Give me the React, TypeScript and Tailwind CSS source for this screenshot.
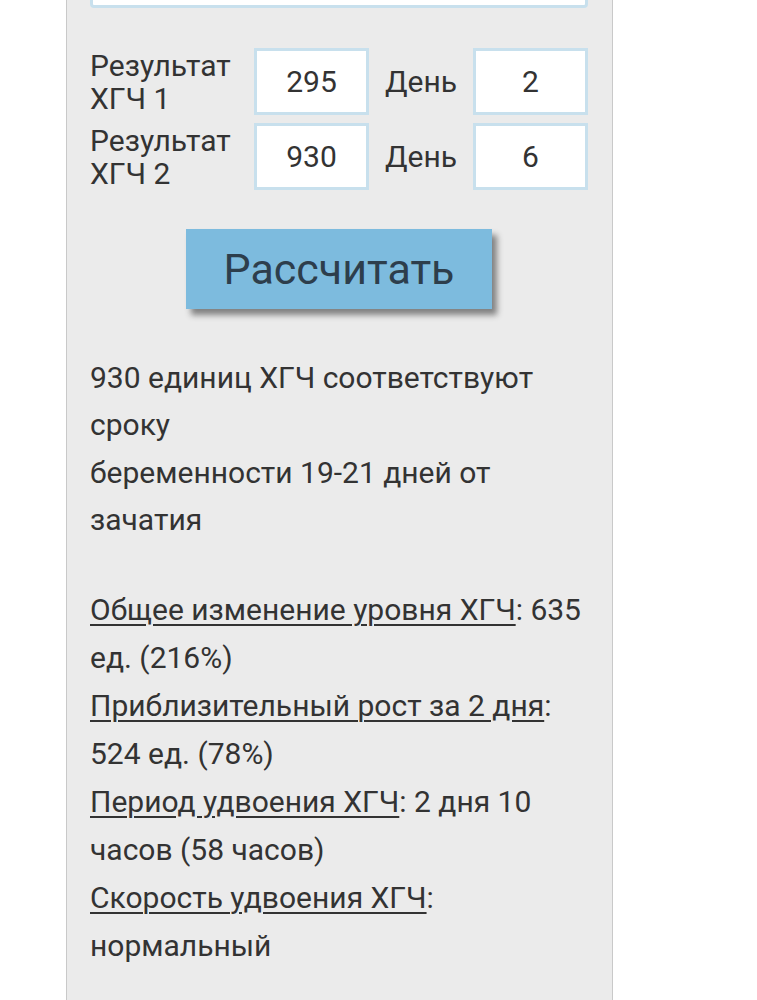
export default function App() {
  const rows = [
    { n: 1, value: '295', day: '2' },
    { n: 2, value: '930', day: '6' },
  ];

  return (
    <div className="min-h-screen bg-white overflow-hidden" style={{ fontFamily: 'Roboto, "Noto Sans", sans-serif' }}>
      <div className="ml-[66px] w-[547px] min-h-[1100px] bg-[#ebebeb] border-x border-[#c9c9c9] pl-[23px] pr-[24px] text-[#333333]">
        {/* bottom of the field above, scrolled out of view */}
        <div className="h-[60px] -mt-[52px] bg-white border-[3px] border-[#c8e0ed] rounded-[4px]" />

        <div className="mt-[40px] flex flex-col gap-[8px]">
          {rows.map((r) => (
            <div key={r.n} className="grid grid-cols-[164px_115px_104px_115px] items-center h-[67px]">
              <div className="text-[30px] leading-[33px]">
                Результат
                <br />
                ХГЧ {r.n}
              </div>
              <div className="h-[67px] bg-white border-[3px] border-[#c8e0ed] flex items-center justify-center text-[30px]">
                {r.value}
              </div>
              <div className="pl-[16px] text-[30px]">День</div>
              <div className="h-[67px] bg-white border-[3px] border-[#c8e0ed] flex items-center justify-center text-[30px]">
                {r.day}
              </div>
            </div>
          ))}
        </div>

        <div className="flex justify-center mt-[39px]">
          <button className="w-[306px] h-[80px] bg-[#7dbbde] text-[#2d3e4c] text-[43px] shadow-[5px_6px_6px_rgba(0,0,0,0.45)]">
            Рассчитать
          </button>
        </div>

        <p className="mt-[45px] text-[30px] leading-[47.3px]">
          930 единиц ХГЧ соответствуют сроку
          <br />
          беременности 19-21 дней от зачатия
        </p>

        <div className="mt-[43px] text-[30px] leading-[47.9px]">
          <span className="underline underline-offset-[4px] decoration-[1.5px]">Общее изменение уровня ХГЧ</span>: 635 ед. (216%)
          <br />
          <span className="underline underline-offset-[4px] decoration-[1.5px]">Приблизительный рост за 2 дня</span>: 524 ед. (78%)
          <br />
          <span className="underline underline-offset-[4px] decoration-[1.5px]">Период удвоения ХГЧ</span>: 2 дня 10 часов (58 часов)
          <br />
          <span className="underline underline-offset-[4px] decoration-[1.5px]">Скорость удвоения ХГЧ</span>: нормальный
        </div>
      </div>
    </div>
  );
}
